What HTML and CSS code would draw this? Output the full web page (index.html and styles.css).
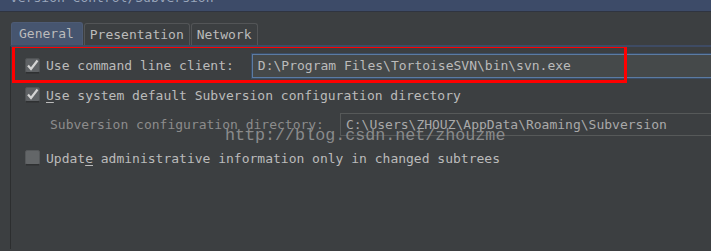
FILE: index.html
```html
<!DOCTYPE html>
<html>
<head>
<meta charset="utf-8">
<link rel="stylesheet" href="styles.css">
</head>
<body>
<div class="titlebar"><span class="title">Version Control/Subversion</span></div>
<div class="tabs">
  <div class="tab selected">General</div>
  <div class="tab">Presentation</div>
  <div class="tab">Network</div>
</div>
<div class="panel">
  <div class="row row1">
    <svg class="cb" width="15" height="16" viewBox="0 0 15 16"><rect x="0.5" y="0.5" width="14" height="14" rx="1.5" fill="#5f6265" stroke="#505355"/><rect x="1" y="14" width="13" height="1.5" fill="#2f3132"/><path d="M3 7.5 L6 11 L12.5 2.5" fill="none" stroke="#d4d4d4" stroke-width="2.2"/></svg>
    <span class="label">Use command line client:</span>
    <div class="field active">D:\Program Files\TortoiseSVN\bin\svn.exe</div>
  </div>
  <div class="row row2">
    <svg class="cb" width="15" height="16" viewBox="0 0 15 16"><rect x="0.5" y="0.5" width="14" height="14" rx="1.5" fill="#5f6265" stroke="#505355"/><rect x="1" y="14" width="13" height="1.5" fill="#2f3132"/><path d="M3 7.5 L6 11 L12.5 2.5" fill="none" stroke="#d4d4d4" stroke-width="2.2"/></svg>
    <span class="label"><u>U</u>se system default Subversion configuration directory</span>
  </div>
  <div class="row row3">
    <span class="label disabled">Subversion configuration <u>d</u>irectory:</span>
    <div class="field inactive">C:\Users\ZHOUZ\AppData\Roaming\Subversion</div>
  </div>
  <div class="row row4">
    <svg class="cb" width="15" height="16" viewBox="0 0 15 16"><rect x="0.5" y="0.5" width="14" height="14" rx="1.5" fill="#636668" stroke="#55585a"/><rect x="1" y="14" width="13" height="1.5" fill="#2f3132"/></svg>
    <span class="label">Updat<u>e</u> administrative information only in changed subtrees</span>
  </div>
  <div class="watermark">http://blog.csdn.net/zhouzme</div>
  <div class="highlight"></div>
</div>
</body>
</html>
```
FILE: styles.css
```css
html, body {
  margin: 0;
  padding: 0;
  background: #3c3f41;
  width: 711px;
  height: 251px;
  overflow: hidden;
}
body {
  font-family: "DejaVu Sans Mono", monospace;
  font-size: 13px;
  color: #bbbbbb;
}
.titlebar {
  height: 11px;
  background: #3d4b68;
  border-bottom: 1px solid #2f3440;
  overflow: hidden;
}
.title {
  display: block;
  margin-top: -10px;
  padding-left: 10px;
  line-height: 15px;
  color: #9aa6bb;
}
.tabs {
  display: flex;
  margin-top: 11px;
  padding-left: 11px;
  height: 22px;
  align-items: flex-end;
}
.tab {
  height: 21px;
  line-height: 21px;
  padding: 0 5px;
  border: 1px solid #535557;
  border-bottom: none;
  border-radius: 3px 3px 0 0;
  margin-right: 1px;
  color: #bbbbbb;
}
.tab.selected {
  height: 22px;
  line-height: 21px;
  background: #46556f;
  border-color: #4d5b75;
  padding: 0 8px 0 7px;
  color: #bbbbbb;
}
.panel {
  position: relative;
  margin-left: 10px;
  border-left: 1px solid #2c2e2f;
  border-top: 2px solid #3e4b64;
  height: 204px;
  overflow: hidden;
  padding-top: 6px;
  box-sizing: border-box;
}
.row {
  display: flex;
  align-items: center;
}
.cb {
  flex: none;
  margin-left: 14px;
  margin-right: 6px;
}
.row1 {
  height: 25px;
}
.row2 {
  height: 18px;
  margin-top: 8px;
}
.row3 {
  height: 23px;
  margin-top: 9px;
}
.row4 {
  height: 18px;
  margin-top: 13px;
}
.label {
  white-space: nowrap;
}
.label u {
  text-underline-offset: 2px;
}
.disabled {
  color: #8c8c8c;
  margin-left: 39px;
}
.field {
  flex: 1;
  box-sizing: border-box;
  white-space: nowrap;
  padding-left: 5px;
  margin-right: -10px;
}
.field.active {
  height: 24px;
  line-height: 22px;
  margin-left: 18px;
  background: #45494a;
  border: 1px solid #5b7ba3;
  box-shadow: 0 0 0 1px #3a4d66;
  color: #bbbbbb;
}
.field.inactive {
  height: 23px;
  line-height: 21px;
  margin-left: 16px;
  border: 1px solid #565959;
  color: #a9a9a9;
}
.watermark {
  position: absolute;
  left: 214px;
  top: 79px;
  font-family: "Liberation Mono", monospace;
  font-size: 16.7px;
  color: #8a8b8c;
  white-space: nowrap;
}
.highlight {
  position: absolute;
  left: 1px;
  top: -2px;
  width: 615px;
  height: 38px;
  box-sizing: border-box;
  border: 3px solid #ff0000;
}
```
